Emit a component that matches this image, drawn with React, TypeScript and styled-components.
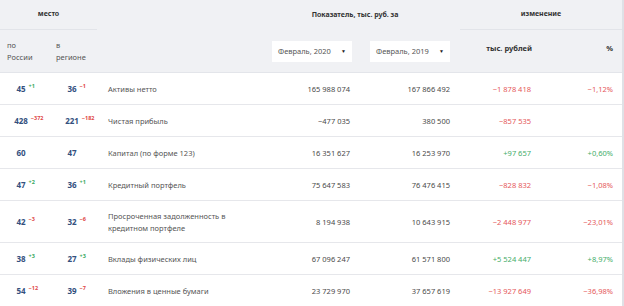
import React from "react";
import styled, { createGlobalStyle } from "styled-components";

const Global = createGlobalStyle`
  html, body { margin: 0; padding: 0; background: #fff; }
  body { font-family: "Noto Sans", "Open Sans", sans-serif; -webkit-font-smoothing: antialiased; }
  * { box-sizing: border-box; }
`;

const COLS = "47px 50px 153px 110px 100px 81px 81px";

const Table = styled.div`
  width: 624px;
  border-right: 2px solid #dfe1e6;
`;

const Head = styled.div`
  display: grid;
  grid-template-columns: ${COLS};
  grid-template-rows: 30px 42px;
  background: #f0f1f4;
  border-bottom: 1px solid #e3e5ea;
`;

const GroupTitle = styled.div<{ $from: number; $to: number; $line?: boolean }>`
  grid-column: ${(p) => p.$from} / ${(p) => p.$to};
  grid-row: 1;
  display: flex;
  align-items: center;
  justify-content: center;
  font-size: 7px;
  font-weight: 700;
  color: #333;
  padding-bottom: 2px;
  border-bottom: ${(p) => (p.$line ? "1px solid #e2e4e9" : "none")};
`;

const SubLabel = styled.div<{ $col: number; $align?: string; $top?: boolean }>`
  grid-column: ${(p) => p.$col};
  grid-row: 2;
  display: flex;
  align-items: ${(p) => (p.$top ? "flex-start" : "center")};
  justify-content: ${(p) => p.$align || "flex-start"};
  padding: ${(p) => (p.$top ? "12px 9px 0 8px" : "0 0 0 7px")};
  font-size: 7.5px;
  line-height: 12px;
  color: #555;
  font-weight: ${(p) => (p.$top ? 700 : 400)};
  ${(p) => (p.$top ? "color: #333;" : "")}
`;

const SelectCell = styled.div<{ $col: number; $pr: number }>`
  grid-column: ${(p) => p.$col};
  grid-row: 2;
  display: flex;
  align-items: center;
  justify-content: flex-end;
  padding-right: ${(p) => p.$pr}px;
`;

const Select = styled.div`
  width: 80px;
  height: 21px;
  background: #fff;
  display: flex;
  align-items: center;
  justify-content: space-between;
  padding: 0 6px 1px 6px;
  font-size: 7.5px;
  color: #555;
`;

const Caret = styled.span`
  font-size: 5px;
  color: #222;
`;

const Row = styled.div<{ $h: number }>`
  display: grid;
  grid-template-columns: ${COLS};
  height: ${(p) => p.$h}px;
  align-items: center;
  border-bottom: 1px solid #e6e7eb;
  font-size: 7.5px;
  color: #555;
`;

const RankCell = styled.div<{ $center: number }>`
  position: relative;
  height: 100%;
  display: flex;
  align-items: center;
  padding-left: ${(p) => p.$center}px;
`;

const RankNum = styled.span`
  position: relative;
  transform: translateX(-50%);
  font-weight: 700;
  color: #33507e;
  font-size: 8px;
  line-height: 12px;
`;

const Delta = styled.sup<{ $pos: boolean }>`
  position: absolute;
  left: calc(100% + 3px);
  top: -3px;
  font-size: 5.5px;
  font-weight: 700;
  color: ${(p) => (p.$pos ? "#3aa860" : "#e04848")};
  white-space: nowrap;
`;

const Name = styled.div`
  padding-left: 11px;
  max-width: 148px;
  line-height: 12px;
`;

const Num = styled.div<{ $pr: number; $color?: string }>`
  text-align: right;
  padding-right: ${(p) => p.$pr}px;
  color: ${(p) => p.$color || "#4a4a4a"};
  white-space: nowrap;
`;

const GREEN = "#45ad6a";
const RED = "#e5585a";

type R = {
  r1: string; d1?: string; r2: string; d2?: string; name: string;
  v1: string; v2: string; ch: string; pct: string; h: number;
};

const rows: R[] = [
  { r1: "45", d1: "+1", r2: "36", d2: "−1", name: "Активы нетто", v1: "165 988 074", v2: "167 866 492", ch: "−1 878 418", pct: "−1,12%", h: 32 },
  { r1: "428", d1: "−372", r2: "221", d2: "−182", name: "Чистая прибыль", v1: "−477 035", v2: "380 500", ch: "−857 535", pct: "", h: 32 },
  { r1: "60", r2: "47", name: "Капитал (по форме 123)", v1: "16 351 627", v2: "16 253 970", ch: "+97 657", pct: "+0,60%", h: 32 },
  { r1: "47", d1: "+2", r2: "36", d2: "+1", name: "Кредитный портфель", v1: "75 647 583", v2: "76 476 415", ch: "−828 832", pct: "−1,08%", h: 32 },
  { r1: "42", d1: "−3", r2: "32", d2: "−6", name: "Просроченная задолженность в кредитном портфеле", v1: "8 194 938", v2: "10 643 915", ch: "−2 448 977", pct: "−23,01%", h: 42 },
  { r1: "38", d1: "+3", r2: "27", d2: "+3", name: "Вклады физических лиц", v1: "67 096 247", v2: "61 571 800", ch: "+5 524 447", pct: "+8,97%", h: 32 },
  { r1: "54", d1: "−12", r2: "39", d2: "−7", name: "Вложения в ценные бумаги", v1: "23 729 970", v2: "37 657 619", ch: "−13 927 649", pct: "−36,98%", h: 32 },
];

const tone = (s: string) => (s.startsWith("+") ? GREEN : RED);

const Rank = ({ center, n, d }: { center: number; n: string; d?: string }) => (
  <RankCell $center={center}>
    <RankNum>
      {n}
      {d && <Delta $pos={d.startsWith("+")}>{d}</Delta>}
    </RankNum>
  </RankCell>
);

export default function App() {
  return (
    <>
      <Global />
      <Table>
        <Head>
          <GroupTitle $from={1} $to={3} $line>место</GroupTitle>
          <GroupTitle $from={4} $to={6}>Показатель, тыс. руб. за</GroupTitle>
          <GroupTitle $from={6} $to={8} $line>изменение</GroupTitle>
          <SubLabel $col={1}>по<br />России</SubLabel>
          <SubLabel $col={2}>&nbsp;в<br />&nbsp;регионе</SubLabel>
          <SelectCell $col={4} $pr={8}>
            <Select>Февраль, 2020<Caret>▼</Caret></Select>
          </SelectCell>
          <SelectCell $col={5} $pr={10}>
            <Select>Февраль, 2019<Caret>▼</Caret></Select>
          </SelectCell>
          <SubLabel $col={6} $align="flex-end" $top>тыс. рублей</SubLabel>
          <SubLabel $col={7} $align="flex-end" $top>%</SubLabel>
        </Head>
        {rows.map((r) => (
          <Row key={r.name} $h={r.h}>
            <Rank center={21} n={r.r1} d={r.d1} />
            <Rank center={25} n={r.r2} d={r.d2} />
            <Name>{r.name}</Name>
            <Num $pr={10}>{r.v1}</Num>
            <Num $pr={10}>{r.v2}</Num>
            <Num $pr={10} $color={tone(r.ch)}>{r.ch}</Num>
            <Num $pr={9} $color={r.pct ? tone(r.pct) : undefined}>{r.pct}</Num>
          </Row>
        ))}
      </Table>
    </>
  );
}
